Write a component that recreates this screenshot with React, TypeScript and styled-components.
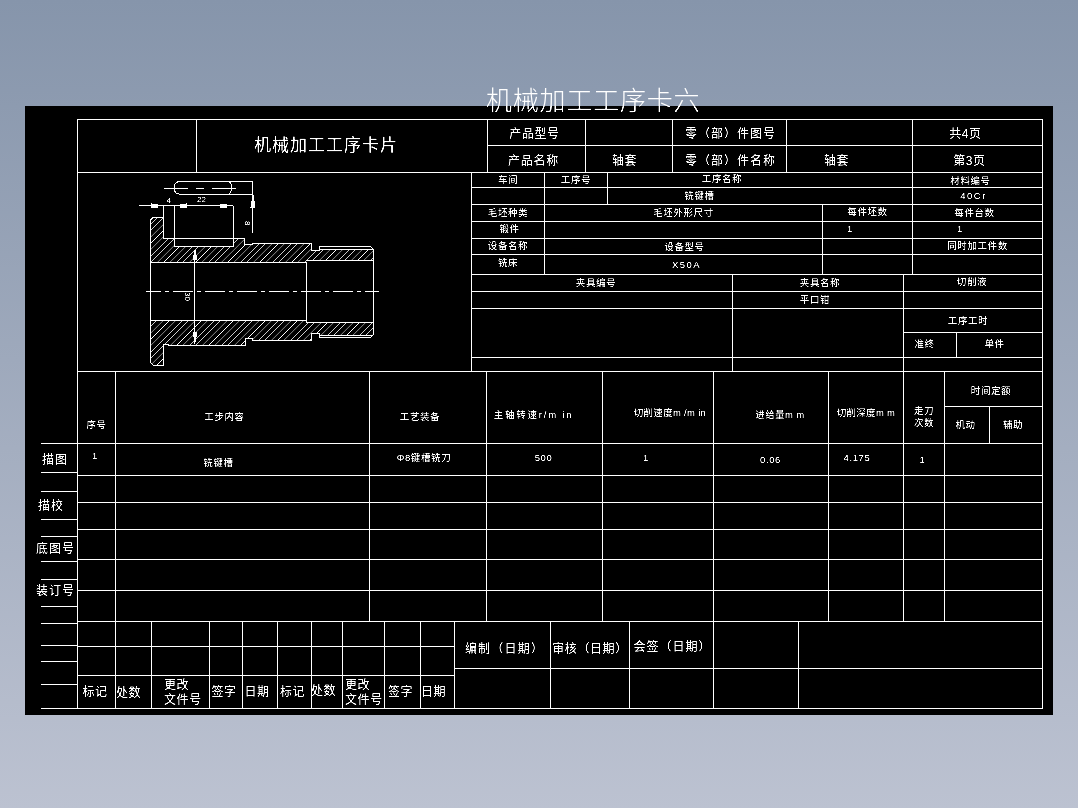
import React from "react";
import styled, { createGlobalStyle } from "styled-components";

const GlobalStyle = createGlobalStyle`
    html, body {
        margin: 0;
        padding: 0;
    }
    body {
        font-family: "Liberation Sans", "Noto Sans CJK SC", sans-serif;
        color: #fff;
    }
`;

const marginRows = [
    { h: 29, label: "描图", nudge: "0 0 0 1px" },
    { h: 19 },
    { h: 28, label: "描校", nudge: "0 0 2px -3px" },
    { h: 17 },
    { h: 25, label: "底图号", nudge: "0 0 4px -5px" },
    { h: 18 },
    { h: 27, label: "装订号", nudge: "0 0 8px -5px" },
    { h: 17 },
    { h: 22 },
    { h: 16 },
    { h: 23 },
    { h: 24 },
];

const hatchLines = Array.from({ length: 85 }, (_, i) => 190 + i * 6.4);

const Drawing = () => (
    <Svg viewBox="78 173 393 198">
        <defs>
            <clipPath id="topHatch">
                <polygon points="150.3,220 153.3,217.3 163.3,217.3 163.3,239 170,238.3 174.3,238.3 174.3,246.7 233.3,246.7 233.3,238.3 244.3,238.3 244.3,244 252,244 252,243.3 311.7,243.3 311.7,250.3 319.3,250.3 319.3,249 373.3,249 373.3,260.3 306.3,260.3 306.3,262.3 150.3,262.3" />
            </clipPath>
            <clipPath id="bottomHatch">
                <polygon points="150.3,320.3 306.3,320.3 306.3,322.7 373.3,322.7 373.3,335 319.3,335 319.3,333.3 311.7,333.3 311.7,340.7 252,340.7 245,338.3 245,345.3 170,345.3 163.3,344 163.3,365.3 153.3,365.3 150.3,362.3" />
            </clipPath>
        </defs>
        <g stroke="#fff" strokeWidth="0.8" fill="none">
            <g clipPath="url(#topHatch)">
                {hatchLines.map((c) => (
                    <line key={`t-${c}`} x1={c - 200} y1="372" x2={c} y2="172" />
                ))}
            </g>
            <g clipPath="url(#bottomHatch)">
                {hatchLines.map((c) => (
                    <line key={`b-${c}`} x1={c - 200} y1="372" x2={c} y2="172" />
                ))}
            </g>
        </g>
        <g stroke="#fff" strokeWidth="1" fill="none" shapeRendering="crispEdges">
            {/* outline of the part */}
            <polyline points="163.3,205.7 163.3,239 170,238.3 244.3,238.3 244.3,244 252,244 252,243.3 311.7,243.3 311.7,250.3 319.3,250.3 319.3,246.7 370.7,246.7 373.3,249 373.3,335 370.7,337 319.3,337 319.3,333.3 311.7,333.3 311.7,340.7 252,340.7 252,338.3 245,338.3 245,345.3 170,345.3 163.3,344 163.3,365.3 153.3,365.3 150.3,362.3 150.3,220 153.3,217.3 163.3,217.3" />
            <polyline points="174.3,205.7 174.3,246.7 233.3,246.7 233.3,205.7" />
            <line x1="319.3" y1="249" x2="373.3" y2="249" />
            <line x1="319.3" y1="335" x2="373.3" y2="335" />
            {/* bore */}
            <polyline points="150.3,262.3 306.3,262.3 306.3,322.7 373.3,322.7" />
            <line x1="306.3" y1="260.3" x2="373.3" y2="260.3" />
            <line x1="150.3" y1="320.3" x2="306.3" y2="320.3" />
            {/* slot seen from above */}
            <path d="M181 181.3 Q174 181.3 174.3 188 Q174 194.3 181 194.3 L252.3 194.3" />
            <path d="M181 181.3 L252.3 181.3 L252.3 233" />
            <path d="M229 181.3 Q235 187 229 194.3" />
            <line x1="164" y1="188.3" x2="236" y2="188.3" strokeDasharray="24 8 8 8" />
            {/* centre line */}
            <line x1="146" y1="291.3" x2="379" y2="291.3" strokeDasharray="20 4 4 4" strokeDashoffset="5.3" />
            {/* dimension lines */}
            <line x1="139" y1="205.7" x2="233.3" y2="205.7" />
            <line x1="194.3" y1="250" x2="194.3" y2="344" />
            <line x1="250" y1="207.3" x2="255" y2="207.3" />
            <line x1="151.7" y1="203" x2="151.7" y2="208" />
            <line x1="186.7" y1="203" x2="186.7" y2="208" />
        </g>
        <g fill="#eeeedd" stroke="none" shapeRendering="crispEdges">
            <rect x="152" y="204" width="6" height="4" />
            <rect x="180" y="204" width="6" height="4" />
            <rect x="220" y="204" width="7" height="4" />
            <rect x="251" y="201" width="3.5" height="6" />
            <rect x="251.7" y="195" width="2" height="6" />
            <rect x="192.5" y="255" width="4" height="5" />
            <rect x="193.5" y="250" width="2" height="5" />
            <rect x="192.5" y="332" width="4" height="5" />
            <rect x="193.5" y="337" width="2" height="5" />
        </g>
        <DimText x="166.5" y="203">4</DimText>
        <DimText x="197" y="202">22</DimText>
        <DimText transform="rotate(90 245 221)" x="245" y="221">8</DimText>
        <DimText transform="rotate(90 185 292)" x="185" y="292">30</DimText>
    </Svg>
);

const App = () => {
    return (
        <Page>
            <GlobalStyle />
            <Panel>
                <BigTitle>机械加工工序卡六</BigTitle>
                <MarginStrip>
                    <MarginSpacer />
                    {marginRows.map((row, i) => (
                        <MarginRow key={i} style={{ height: row.h }}>
                            {row.label && <MarginLabel $nudge={row.nudge}>{row.label}</MarginLabel>}
                        </MarginRow>
                    ))}
                </MarginStrip>
                <Sheet>
                    <HeaderGrid>
                        <Cell $rows={2} />
                        <Cell $rows={2} $fs={17} $ls={1} $pad="0 32px 1px 0">
                            机械加工工序卡片
                        </Cell>
                        <Cell $fs={12} $ls={0.6} $pad="3px 4px 0 0">产品型号</Cell>
                        <Cell />
                        <Cell $fs={12} $ls={1} $pad="3px 0 0 2px">零（部）件图号</Cell>
                        <Cell />
                        <Cell $fs={12} $pad="2px 24px 0 0">共4页</Cell>
                        <Cell $fs={12} $ls={0.8} $pad="3px 6px 0 0">产品名称</Cell>
                        <Cell $fs={12} $pad="3px 9px 0 0">轴套</Cell>
                        <Cell $fs={12} $ls={1} $pad="3px 0 0 2px">零（部）件名称</Cell>
                        <Cell $fs={12} $pad="3px 26px 0 0">轴套</Cell>
                        <Cell $fs={12} $pad="3px 16px 0 0">第3页</Cell>
                    </HeaderGrid>
                    <MiddleRow>
                        <DrawingCell>
                            <Drawing />
                        </DrawingCell>
                        <InfoColumn>
                            <InfoGrid>
                                <Cell>车间</Cell>
                                <Cell>工序号</Cell>
                                <Cell $cols={2} $pad="0 76px 3px 0">工序名称</Cell>
                                <Cell $pad="2px 14px 0 0">材料编号</Cell>
                                <Cell />
                                <Cell />
                                <Cell $cols={2} $pad="0 121px 0 0">铣键槽</Cell>
                                <Cell $ls={1.5} $pad="0 8px 0 0">40Cr</Cell>
                                <Cell>毛坯种类</Cell>
                                <Cell $cols={2} $pad="0 0 0 0">毛坯外形尺寸</Cell>
                                <Cell $pad="0 0 2px 0">每件坯数</Cell>
                                <Cell $pad="0 6px 0 0">每件台数</Cell>
                                <Cell $pad="0 0 3px 3px">锻件</Cell>
                                <Cell $cols={2} />
                                <Cell $pad="0 35px 3px 0">1</Cell>
                                <Cell $pad="0 35px 3px 0">1</Cell>
                                <Cell $pad="0 0 2px 0">设备名称</Cell>
                                <Cell $cols={2} $pad="0 0 0 2px">设备型号</Cell>
                                <Cell />
                                <Cell $pad="0 0 2px 0">同时加工件数</Cell>
                                <Cell $pad="0 0 4px 0">铣床</Cell>
                                <Cell $cols={2} $ls={1.5} $pad="0 0 0 6px">X50A</Cell>
                                <Cell />
                                <Cell />
                            </InfoGrid>
                            <FixtureGrid>
                                <Cell $pad="0 12px 0 0">夹具编号</Cell>
                                <Cell $pad="0 0 0 4px">夹具名称</Cell>
                                <Cell $cols={2} $pad="0 2px 2px 0">切削液</Cell>
                                <Cell />
                                <Cell $pad="0 6px 0 0">平口钳</Cell>
                                <Cell $cols={2} />
                                <Cell $rows={2} />
                                <Cell $rows={2} />
                                <Cell $cols={2} $pad="0 10px 0 0">工序工时</Cell>
                                <Cell $pad="0 11px 2px 0">准终</Cell>
                                <Cell $pad="0 10px 2px 0">单件</Cell>
                                <Cell />
                                <Cell />
                                <Cell $cols={2} />
                            </FixtureGrid>
                        </InfoColumn>
                    </MiddleRow>
                    <ProcessGrid>
                        <Cell $rows={2} $items="end" $pad="0 0 14px 0">序号</Cell>
                        <Cell $rows={2} $items="end" $pad="0 36px 22px 0">工步内容</Cell>
                        <Cell $rows={2} $items="end" $pad="0 16px 22px 0">工艺装备</Cell>
                        <Cell $rows={2} $items="end" $pad="0 22px 24px 0" $ls={1.8}>主轴转速r/m in</Cell>
                        <Cell $rows={2} $items="end" $pad="0 0 26px 24px" $ls={0.3}>切削速度m /m in</Cell>
                        <Cell $rows={2} $items="end" $pad="0 0 24px 18px" $ls={0.4}>进给量m m</Cell>
                        <Cell $rows={2} $items="end" $pad="0 0 26px 0" $ls={0.3}>切削深度m m</Cell>
                        <Cell $rows={2} $items="end" $pad="0 0 14px 0" $lh={12}>走刀<br />次数</Cell>
                        <Cell $cols={2} $pad="4px 5px 0 0">时间定额</Cell>
                        <Cell $pad="0 3px 0 0">机动</Cell>
                        <Cell $pad="0 6px 0 0">辅助</Cell>

                        <Cell $pad="0 3px 8px 0">1</Cell>
                        <Cell $pad="6px 48px 0 0">铣键槽</Cell>
                        <Cell $pad="0 8px 3px 0">Φ8键槽铣刀</Cell>
                        <Cell $pad="0 2px 4px 0">500</Cell>
                        <Cell $pad="0 24px 4px 0">1</Cell>
                        <Cell $pad="0 1px 0 0">0.06</Cell>
                        <Cell $pad="0 18px 4px 0">4.175</Cell>
                        <Cell $pad="0 3px 0 0">1</Cell>
                        <Cell $cols={2} />
                        {Array.from({ length: 5 }, (_, r) => (
                            <React.Fragment key={r}>
                                {Array.from({ length: 8 }, (_, c) => (
                                    <Cell key={c} />
                                ))}
                                <Cell $cols={2} />
                            </React.Fragment>
                        ))}
                    </ProcessGrid>
                    <BottomRow>
                        <SignGrid>
                            {Array.from({ length: 20 }, (_, i) => (
                                <Cell key={i} />
                            ))}
                            <Cell $fs={12} $pad="0 3px 0 0">标记</Cell>
                            <Cell $fs={12} $pad="2px 10px 0 0">处数</Cell>
                            <Cell $fs={12} $lh={15} $j="flex-start" $pad="1px 0 0 12px">更改<br />文件号</Cell>
                            <Cell $fs={12} $pad="0 4px 0 0">签字</Cell>
                            <Cell $fs={12} $pad="0 6px 0 0">日期</Cell>
                            <Cell $fs={12} $pad="0 4px 0 0">标记</Cell>
                            <Cell $fs={12} $pad="0 7px 2px 0">处数</Cell>
                            <Cell $fs={12} $lh={15} $j="flex-start" $pad="1px 0 0 2px">更改<br />文件号</Cell>
                            <Cell $fs={12} $pad="0 4px 0 0">签字</Cell>
                            <Cell $fs={12} $pad="0 8px 0 0">日期</Cell>
                        </SignGrid>
                        <ApprovalGrid>
                            <Cell $fs={12} $ls={1.2} $pad="8px 0 0 4px">编制（日期）</Cell>
                            <Cell $fs={12} $ls={0.6} $pad="8px 0 0 0">审核（日期）</Cell>
                            <Cell $fs={12} $ls={1} $pad="4px 0 0 2px">会签（日期）</Cell>
                            <Cell />
                            <Cell />
                            <Cell />
                            <Cell />
                            <Cell />
                            <Cell />
                            <Cell />
                        </ApprovalGrid>
                    </BottomRow>
                </Sheet>
            </Panel>
        </Page>
    );
};

export default App;

interface CellProps {
    $cols?: number;
    $rows?: number;
    $fs?: number;
    $ls?: number;
    $lh?: number;
    $pad?: string;
    $items?: string;
    $j?: string;
}

const Page = styled.div`
    width: 1078px;
    height: 808px;
    box-sizing: border-box;
    padding: 106px 25px 0;
    overflow: hidden;
    background: linear-gradient(180deg, #8695ab 0%, #bcc2d1 100%);
`;

const Panel = styled.div`
    position: relative;
    display: flex;
    width: 1028px;
    height: 609px;
    box-sizing: border-box;
    padding: 13px 0 0 16px;
    background: #000;
    filter: contrast(2.2);
`;

const BigTitle = styled.div`
    position: absolute;
    left: 461px;
    top: -20px;
    font-size: 26px;
    line-height: 30px;
    letter-spacing: 0.8px;
    font-weight: 300;
    white-space: nowrap;
`;

const MarginStrip = styled.div`
    display: flex;
    flex-direction: column;
    width: 36px;
`;

const MarginSpacer = styled.div`
    height: 325px;
    box-sizing: border-box;
    border-bottom: 1px solid #fff;
`;

const MarginRow = styled.div`
    display: flex;
    align-items: center;
    box-sizing: border-box;
    border-bottom: 1px solid #fff;
`;

const MarginLabel = styled.span<{ $nudge?: string }>`
    margin: ${(props) => props.$nudge};
    font-size: 12px;
    letter-spacing: 1px;
    white-space: nowrap;
`;

const Sheet = styled.div`
    display: flex;
    flex-direction: column;
    width: 966px;
    height: 590px;
    box-sizing: border-box;
    border-top: 1px solid #fff;
    border-left: 1px solid #fff;
`;

const Cell = styled.div<CellProps>`
    grid-column: span ${(props) => props.$cols || 1};
    grid-row: span ${(props) => props.$rows || 1};
    display: flex;
    align-items: ${(props) => props.$items || "center"};
    justify-content: ${(props) => props.$j || "center"};
    box-sizing: border-box;
    min-width: 0;
    padding: ${(props) => props.$pad || 0};
    border-right: 1px solid #fff;
    border-bottom: 1px solid #fff;
    font-size: ${(props) => props.$fs || 9.5}px;
    line-height: ${(props) => (props.$lh ? `${props.$lh}px` : 1)};
    letter-spacing: ${(props) => props.$ls ?? 0.6}px;
    white-space: nowrap;
`;

const HeaderGrid = styled.div`
    display: grid;
    grid-template-columns: 119px 291px 98px 87px 114px 126px 130px;
    grid-template-rows: 26px 27px;
`;

const MiddleRow = styled.div`
    display: flex;
`;

const DrawingCell = styled.div`
    width: 394px;
    height: 199px;
    box-sizing: border-box;
    border-right: 1px solid #fff;
    border-bottom: 1px solid #fff;
`;

const Svg = styled.svg`
    display: block;
    width: 393px;
    height: 198px;
`;

const DimText = styled.text`
    fill: #fff;
    font-size: 8px;
`;

const InfoColumn = styled.div`
    display: flex;
    flex-direction: column;
    width: 571px;
`;

const InfoGrid = styled.div`
    display: grid;
    grid-template-columns: 73px 63px 215px 90px 130px;
    grid-template-rows: 15px 17px 17px 17px 16px 20px;
`;

const FixtureGrid = styled.div`
    display: grid;
    grid-template-columns: 261px 171px 53px 86px;
    grid-template-rows: 17px 17px 24px 25px 14px;
`;

const ProcessGrid = styled.div`
    display: grid;
    grid-template-columns: 38px 254px 117px 116px 111px 115px 75px 41px 45px 53px;
    grid-template-rows: 35px 37px 32px 27px 27px 30px 31px 31px;
`;

const BottomRow = styled.div`
    display: flex;
`;

const SignGrid = styled.div`
    display: grid;
    width: 377px;
    grid-template-columns: 38px 36px 58px 33px 35px 34px 31px 42px 36px 34px;
    grid-template-rows: 25px 29px 33px;
`;

const ApprovalGrid = styled.div`
    display: grid;
    width: 588px;
    grid-template-columns: 96px 79px 84px 85px 244px;
    grid-template-rows: 47px 40px;
`;
